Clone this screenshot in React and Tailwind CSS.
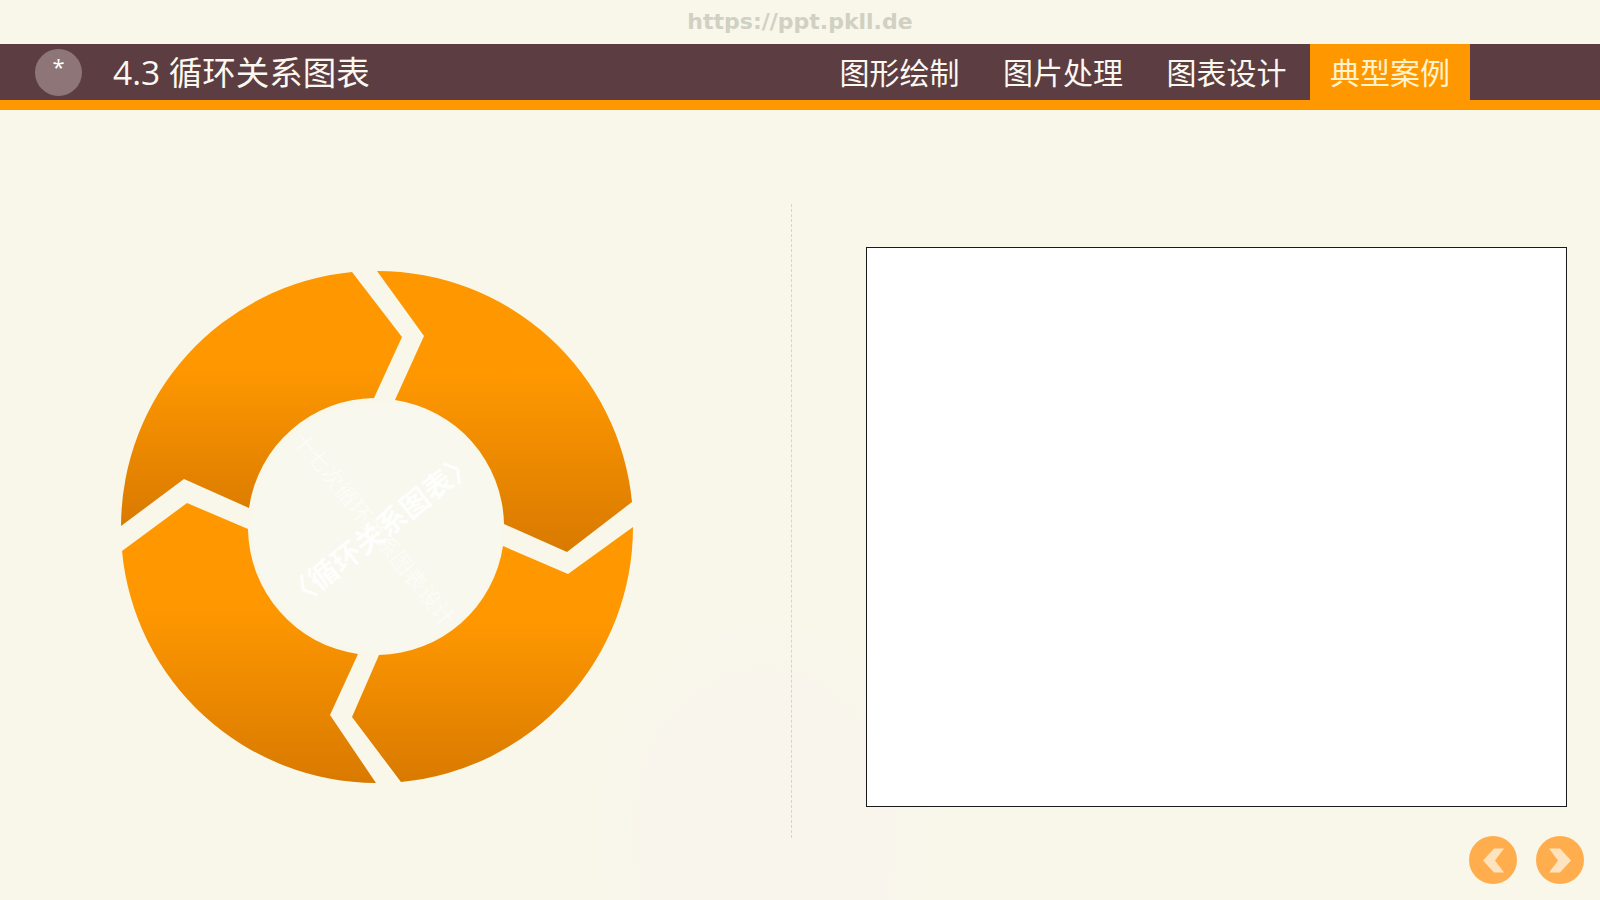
import React from 'react';

const cjk = { fontFamily: '"Open Sans", "Noto Sans CJK SC", sans-serif' };

const segments = [
  'M352 272 L402 337 L374 398 A128 128 0 0 0 249 508 L184 479 L121 526 A256 256 0 0 1 352 272 Z',
  'M377 271 L424 336 L395 400 A128 128 0 0 1 504 524 L567 552 L632 502 A256 256 0 0 0 377 271 Z',
  'M503 546 L568 574 L633 527 A256 256 0 0 1 401 782 L352 717 L379 655 A128 128 0 0 0 503 546 Z',
  'M358 654 L330 715 L376 783 A256 256 0 0 1 122 551 L187 503 L248 529 A128 128 0 0 0 358 654 Z',
];

function CycleChart() {
  return (
    <svg className="block h-[520px] w-[520px]" viewBox="117 267 520 520">
      <defs>
        <linearGradient id="seg" x1="0" y1="0" x2="0" y2="1">
          <stop offset="0.36" stopColor="#ff9800" />
          <stop offset="1" stopColor="#d97a00" />
        </linearGradient>
      </defs>
      {segments.map((d) => (
        <path key={d} d={d} fill="url(#seg)" />
      ))}
      <circle cx="377" cy="527" r="125" fill="#f8f8ee" />
      {/* faint crossed text in the hub */}
      <text
        x="375"
        y="528"
        textAnchor="middle"
        dominantBaseline="central"
        transform="rotate(51 375 528)"
        fill="#ffffff"
        fillOpacity="0.6"
        fontSize="22"
        style={cjk}
      >
        十七次循环关系图表设计
      </text>
      <text
        x="380"
        y="529"
        textAnchor="middle"
        dominantBaseline="central"
        transform="rotate(-38 380 529)"
        fill="#ffffff"
        fillOpacity="0.9"
        fontSize="29"
        fontWeight="700"
        style={cjk}
      >
        〈循环关系图表〉
      </text>
    </svg>
  );
}

function NavButton({ flip }) {
  return (
    <button className="flex h-[48px] w-[48px] items-center justify-center rounded-full bg-[#ffad4d]">
      <svg className="h-[47px] w-[47px]" viewBox="0 0 47 47">
        {flip ? (
          <polygon points="34,23.5 23,11.5 12,11.5 21,23.5 12,35.5 23,35.5" fill="#fde3be" />
        ) : (
          <polygon points="13,23.5 24,11.5 34,11.5 25,23.5 34,35.5 24,35.5" fill="#fde3be" />
        )}
      </svg>
    </button>
  );
}

const tabs = ['图形绘制', '图片处理', '图表设计', '典型案例'];

export default function App() {
  return (
    <div
      className="flex h-screen w-full flex-col overflow-hidden bg-[#f8f7ea] bg-[radial-gradient(ellipse_170px_210px_at_765px_830px,#f9f5ec_75%,transparent_100%)]"
      style={cjk}
    >
      {/* url strip */}
      <div className="flex h-[44px] items-center justify-center">
        <span
          className="text-[22px] font-bold leading-none text-[#d0d0c3]"
          style={{ fontFamily: '"DejaVu Sans", sans-serif' }}
        >
          https://ppt.pkll.de
        </span>
      </div>

      {/* header */}
      <div className="flex h-[66px] items-stretch border-b-[10px] border-[#ff9800] bg-[#5c3d41] pr-[130px]">
        <div className="ml-[35px] mt-[5px] flex h-[47px] w-[47px] items-start justify-center rounded-full bg-[#8e7678] pt-[6px] text-[22px] leading-none text-white">
          *
        </div>
        <div className="ml-[31px] flex items-center whitespace-pre pt-[2px] text-[33.5px] leading-none text-[#fbf8f0]">
          4.3 循环关系图表
        </div>
        <div className="ml-auto flex gap-[3.5px]">
          {tabs.map((t, i) => (
            <div
              key={t}
              className={
                i === 3
                  ? 'flex w-[160px] items-center justify-center bg-[#ff9800] text-[30px] text-[#fff3d0]'
                  : 'flex w-[160px] items-center justify-center text-[30px] text-[#fbf8f0]'
              }
            >
              {t}
            </div>
          ))}
        </div>
      </div>

      {/* body */}
      <div className="flex flex-1">
        <div className="w-[791px] pl-[117px] pt-[157px]">
          <CycleChart />
        </div>
        <div className="mt-[94px] h-[634px] border-l border-dashed border-[#d8d5c8]" />
        <div className="flex flex-1 flex-col pl-[74px] pr-[16px] pt-[137px]">
          <div className="h-[560px] w-[701px] border border-[#1a1a1a] bg-white" />
          <div className="mt-[29px] flex justify-end gap-[19px]">
            <NavButton />
            <NavButton flip />
          </div>
        </div>
      </div>
    </div>
  );
}
